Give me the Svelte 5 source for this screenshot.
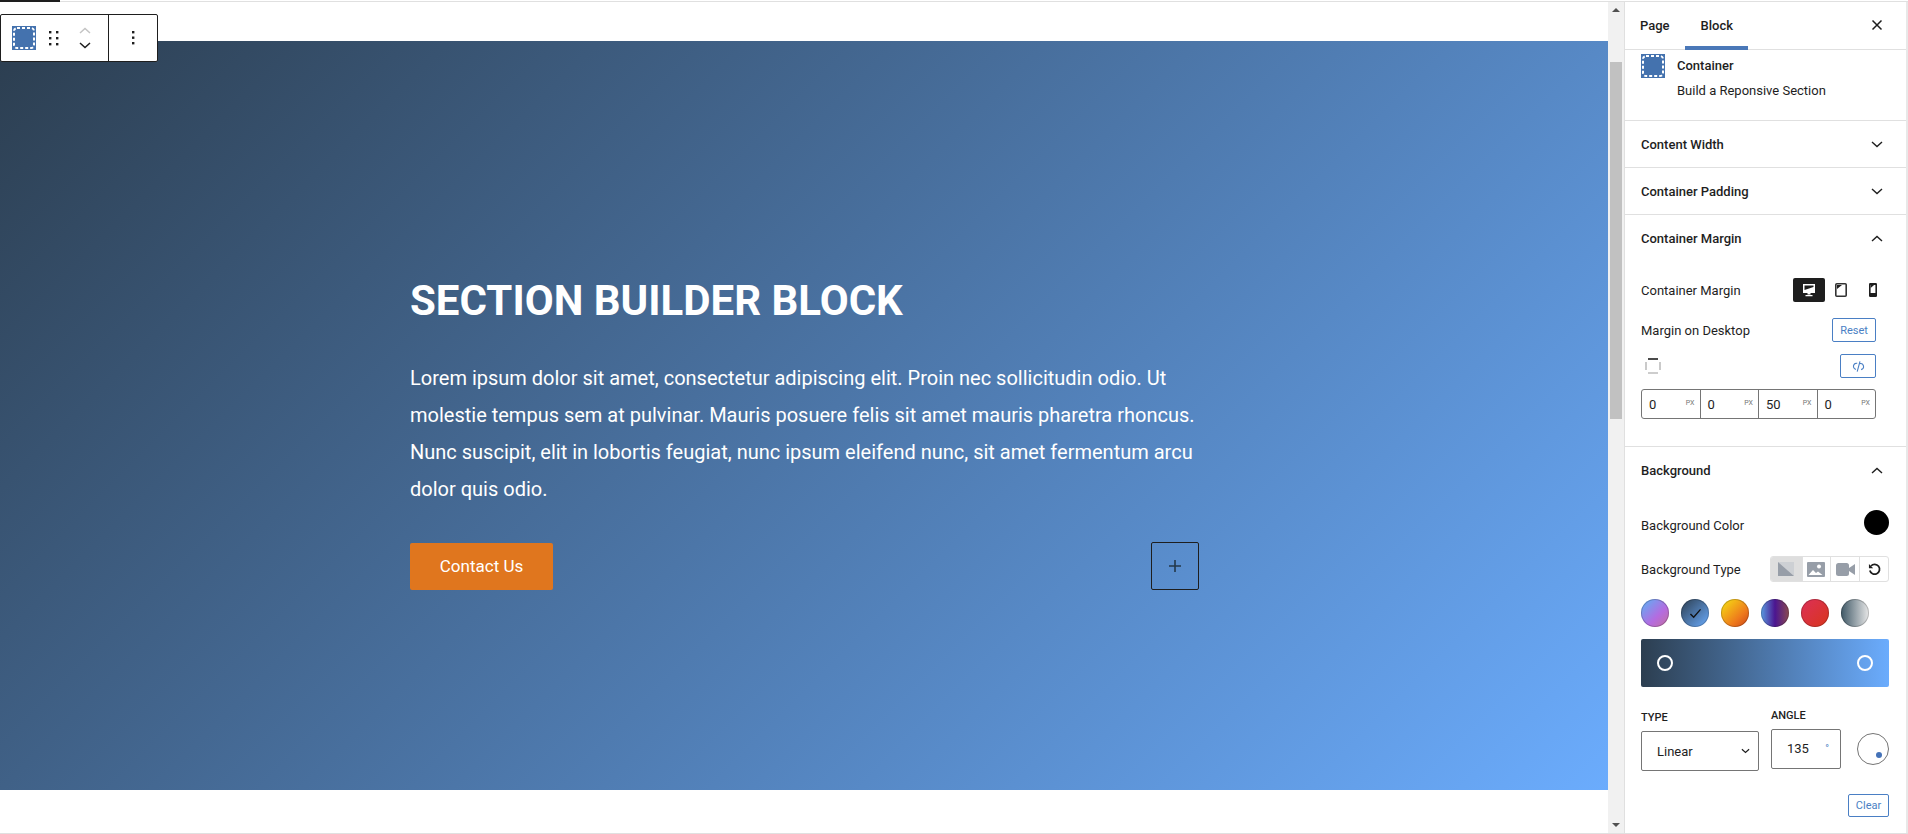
<script>
  const swatches = [
    { bg: 'linear-gradient(135deg, #6aa6f2 12%, #b46be0 60%, #c4709c 100%)' },
    { bg: 'linear-gradient(135deg, #2c3e50, #6bacfd)', active: true },
    { bg: 'linear-gradient(135deg, #f5d414 10%, #ee7a1c 65%, #cc4418)' },
    { bg: 'linear-gradient(90deg, #5a9be0, #4b1590 50%, #8a4a50)' },
    { bg: 'linear-gradient(135deg, #dc3058, #d8351c)' },
    { bg: 'linear-gradient(90deg, #3f5866, #e8e8e8)' }
  ];
  const margins = ['0', '0', '50', '0'];
</script>

<div class="topline"><span class="progress"></span></div>

<div class="editor">
  <main class="canvas">
    <div class="toolbar">
      <div class="tool-group">
        <svg class="block-icon" viewBox="0 0 24 24" width="24" height="24">
          <rect width="24" height="24" fill="#4472ae" />
          <rect x="2" y="2" width="20" height="20" rx="3" fill="none" stroke="#fff" stroke-width="2" stroke-dasharray="3 2" />
        </svg>
        <svg class="drag" viewBox="0 0 10 16" width="10" height="16">
          <g fill="#1e1e1e">
            <rect x="0" y="1" width="2.4" height="2.4" /><rect x="7" y="1" width="2.4" height="2.4" />
            <rect x="0" y="7" width="2.4" height="2.4" /><rect x="7" y="7" width="2.4" height="2.4" />
            <rect x="0" y="13" width="2.4" height="2.4" /><rect x="7" y="13" width="2.4" height="2.4" />
          </g>
        </svg>
        <div class="movers">
          <svg viewBox="0 0 12 7" width="12" height="7"><path d="M1 6l5-4.5L11 6" fill="none" stroke="#c4c4c4" stroke-width="1.5" /></svg>
          <svg viewBox="0 0 12 7" width="12" height="7"><path d="M1 1l5 4.5L11 1" fill="none" stroke="#1e1e1e" stroke-width="1.5" /></svg>
        </div>
      </div>
      <div class="tool-more">
        <svg viewBox="0 0 3 14" width="3" height="14">
          <g fill="#1e1e1e"><rect y="0" width="2.4" height="2.4" /><rect y="5.5" width="2.4" height="2.4" /><rect y="11" width="2.4" height="2.4" /></g>
        </svg>
      </div>
    </div>

    <section class="hero">
      <div class="hero-inner">
        <h1>SECTION BUILDER BLOCK</h1>
        <p>Lorem ipsum dolor sit amet, consectetur adipiscing elit. Proin nec sollicitudin odio. Ut molestie tempus sem at pulvinar. Mauris posuere felis sit amet mauris pharetra rhoncus. Nunc suscipit, elit in lobortis feugiat, nunc ipsum eleifend nunc, sit amet fermentum arcu dolor quis odio.</p>
        <div class="hero-actions">
          <button class="contact">Contact Us</button>
          <button class="inserter" aria-label="Add block">
            <svg viewBox="0 0 14 14" width="14" height="14"><path d="M7 1v12M1 7h12" stroke="#24384a" stroke-width="1.6" /></svg>
          </button>
        </div>
      </div>
    </section>
  </main>

  <div class="scrollbar">
    <span class="arrow up"></span>
    <span class="thumb"></span>
    <span class="arrow down"></span>
  </div>

  <aside class="sidebar">
    <div class="tabs">
      <span class="tab page">Page</span>
      <span class="tab block">Block</span>
      <svg class="close" viewBox="0 0 12 12" width="12" height="12"><path d="M1.5 1.5l9 9M10.5 1.5l-9 9" stroke="#1e1e1e" stroke-width="1.5" /></svg>
    </div>

    <div class="info">
      <svg viewBox="0 0 24 24" width="24" height="24">
        <rect width="24" height="24" fill="#4472ae" />
        <rect x="2" y="2" width="20" height="20" rx="3" fill="none" stroke="#fff" stroke-width="2" stroke-dasharray="3 2" />
      </svg>
      <div class="info-text">
        <strong>Container</strong>
        <span>Build a Reponsive Section</span>
      </div>
    </div>

    <div class="panel-head closed">
      <span>Content Width</span>
      <svg viewBox="0 0 12 7" width="12" height="7"><path d="M1 1l5 4.5L11 1" fill="none" stroke="#1e1e1e" stroke-width="1.4" /></svg>
    </div>
    <div class="panel-head closed">
      <span>Container Padding</span>
      <svg viewBox="0 0 12 7" width="12" height="7"><path d="M1 1l5 4.5L11 1" fill="none" stroke="#1e1e1e" stroke-width="1.4" /></svg>
    </div>

    <div class="panel margin-panel">
      <div class="panel-head">
        <span>Container Margin</span>
        <svg viewBox="0 0 12 7" width="12" height="7"><path d="M1 6l5-4.5L11 6" fill="none" stroke="#1e1e1e" stroke-width="1.4" /></svg>
      </div>
      <div class="row device-row">
        <span class="label">Container Margin</span>
        <div class="devices">
          <span class="device active">
            <svg viewBox="0 0 14 14" width="14" height="14">
              <path d="M1 1h12v9H1z" fill="#fff" /><path d="M2.5 2.5h9v1.5l-9 3z" fill="#1e1e1e" /><path d="M5.5 10h3v1.5h-3zM3.5 12h7v1.2h-7z" fill="#fff" />
            </svg>
          </span>
          <span class="device">
            <svg viewBox="0 0 12 14" width="12" height="14">
              <rect x="0.8" y="0.8" width="10.4" height="12.4" rx="1" fill="#fff" stroke="#333" stroke-width="1.6" /><path d="M2 2h5l-5 4z" fill="#1e1e1e" />
            </svg>
          </span>
          <span class="device">
            <svg viewBox="0 0 8 14" width="8" height="14">
              <rect width="8" height="14" rx="1.2" fill="#1e1e1e" /><path d="M1.6 2h4.8v8H1.6z" fill="#fff" /><path d="M1.6 2h3.5l-3.5 3z" fill="#1e1e1e" />
            </svg>
          </span>
        </div>
      </div>
      <div class="row reset-row">
        <span class="label">Margin on Desktop</span>
        <button class="outline reset">Reset</button>
      </div>
      <div class="row link-row">
        <svg class="side-icon" viewBox="0 0 16 16" width="16" height="16">
          <path d="M3 1h10" stroke="#1e1e1e" stroke-width="1.6" />
          <path d="M1 4v8M15 4v8M3 15h10" stroke="#bdbdbd" stroke-width="1.6" fill="none" />
        </svg>
        <button class="outline link" aria-label="Link values">
          <svg viewBox="0 0 14 14" width="13" height="13">
            <path d="M5.6 3.6a3.3 3.3 0 0 0-1.4 6.5M8.4 3.9a3.3 3.3 0 0 1 1.4 6.5M8.6 1.5l-3 11" fill="none" stroke="#4a7fc4" stroke-width="1.2" />
          </svg>
        </button>
      </div>
      <div class="spacing">
        {#each margins as value}
          <div class="cell"><span>{value}</span><small>PX</small></div>
        {/each}
      </div>
    </div>

    <div class="panel bg-panel">
      <div class="panel-head">
        <span>Background</span>
        <svg viewBox="0 0 12 7" width="12" height="7"><path d="M1 6l5-4.5L11 6" fill="none" stroke="#1e1e1e" stroke-width="1.4" /></svg>
      </div>
      <div class="row color-row">
        <span class="label">Background Color</span>
        <span class="color-dot"></span>
      </div>
      <div class="row type-row">
        <span class="label">Background Type</span>
        <div class="bg-types">
          <span class="bg-type active">
            <svg viewBox="0 0 16 14" width="16" height="14"><path d="M0 0h16v14z" fill="#cdd0d4" /><path d="M0 0l16 14H0z" fill="#979ea8" /></svg>
          </span>
          <span class="bg-type">
            <svg viewBox="0 0 18 15" width="18" height="15">
              <rect width="18" height="15" rx="1" fill="#979ea8" /><circle cx="12" cy="4.5" r="2" fill="#fff" /><path d="M1.5 13l4.5-5 3 3 2-1.5 4.5 3.5z" fill="#fff" />
            </svg>
          </span>
          <span class="bg-type">
            <svg viewBox="0 0 19 13" width="19" height="13">
              <rect width="13" height="13" rx="2.5" fill="#979ea8" /><path d="M13 5l6-4v11l-6-4z" fill="#979ea8" />
            </svg>
          </span>
          <span class="bg-type">
            <svg viewBox="0 0 14 14" width="13" height="13">
              <path d="M3.2 3.2A5.3 5.3 0 1 1 2 8" fill="none" stroke="#1e1e1e" stroke-width="1.9" /><path d="M1 1v4.6h4.6z" fill="#1e1e1e" />
            </svg>
          </span>
        </div>
      </div>
      <div class="swatches">
        {#each swatches as s}
          <span class="swatch" style="background: {s.bg}">
            {#if s.active}
              <svg viewBox="0 0 14 12" width="13" height="11"><path d="M1.5 6.5l3.5 3.5 7.5-8.5" fill="none" stroke="#111" stroke-width="1.5" /></svg>
            {/if}
          </span>
        {/each}
      </div>
      <div class="gradient-bar">
        <span class="handle"></span>
        <span class="handle"></span>
      </div>
      <div class="gradient-controls">
        <div class="field type-field">
          <span class="cap">TYPE</span>
          <div class="select">
            <span>Linear</span>
            <svg viewBox="0 0 10 6" width="9" height="6"><path d="M1 1l4 3.6L9 1" fill="none" stroke="#1e1e1e" stroke-width="1.3" /></svg>
          </div>
        </div>
        <div class="field angle-field">
          <span class="cap">ANGLE</span>
          <div class="angle-input"><span>135</span><small>°</small></div>
        </div>
        <div class="dial"><span class="dial-dot"></span></div>
      </div>
      <div class="clear-row">
        <button class="outline clear">Clear</button>
      </div>
    </div>
  </aside>
</div>

<style>
  :global(body) {
    margin: 0;
    background: #fff;
    font-family: Roboto, "Liberation Sans", sans-serif;
    overflow: hidden;
  }

  .topline {
    height: 1px;
    border-bottom: 1px solid #e0e0e0;
    position: relative;
    box-sizing: content-box;
  }

  .progress {
    position: absolute;
    left: 0;
    top: 0;
    width: 60px;
    height: 2px;
    background: #1e1e1e;
  }

  .editor {
    display: flex;
    height: 831px;
    border-bottom: 1px solid #e0e0e0;
    overflow: hidden;
  }

  .canvas {
    flex: 1;
    min-width: 0;
    padding-top: 39px;
    position: relative;
  }

  .toolbar {
    position: absolute;
    left: 0;
    top: 12px;
    width: 158px;
    height: 48px;
    box-sizing: border-box;
    display: flex;
    background: #fff;
    border: 1.5px solid #1e1e1e;
    border-radius: 2px;
  }

  .tool-group {
    width: 108px;
    box-sizing: border-box;
    display: flex;
    align-items: center;
    border-right: 1.5px solid #1e1e1e;
    padding-left: 11px;
  }

  .drag {
    margin-left: 13px;
  }

  .movers {
    display: flex;
    flex-direction: column;
    gap: 8px;
    margin-left: 20px;
  }

  .tool-more {
    flex: 1;
    display: flex;
    align-items: center;
    justify-content: center;
  }

  .hero {
    height: 749px;
    box-sizing: border-box;
    padding: 230px 0 0 410px;
    background: linear-gradient(135deg, #2c3e50 0%, #6bacfd 100%);
    color: #fff;
  }

  .hero-inner {
    width: 789px;
  }

  h1 {
    margin: 0;
    font-size: 42px;
    line-height: 60px;
    font-weight: 700;
  }

  .hero p {
    margin: 29px 0 0;
    font-size: 20px;
    line-height: 37px;
  }

  .hero-actions {
    display: flex;
    justify-content: space-between;
    align-items: center;
    margin-top: 34px;
  }

  .contact {
    width: 143px;
    height: 47px;
    border: 0;
    border-radius: 2px;
    background: #e0761e;
    color: #fff;
    font: 400 17px Roboto, sans-serif;
  }

  .inserter {
    width: 48px;
    height: 48px;
    padding: 0;
    display: flex;
    align-items: center;
    justify-content: center;
    background: transparent;
    border: 1.5px solid #1e1e1e;
    border-radius: 2px;
  }

  .scrollbar {
    width: 16px;
    flex: none;
    background: #f1f1f1;
    position: relative;
  }

  .thumb {
    position: absolute;
    left: 2px;
    right: 2px;
    top: 60px;
    height: 357px;
    background: #c1c1c1;
  }

  .arrow {
    position: absolute;
    left: 4px;
    width: 0;
    height: 0;
    border-left: 4px solid transparent;
    border-right: 4px solid transparent;
  }

  .arrow.up {
    top: 6px;
    border-bottom: 4px solid #505050;
  }

  .arrow.down {
    bottom: 6px;
    border-top: 4px solid #505050;
  }

  .sidebar {
    width: 284px;
    flex: none;
    box-sizing: border-box;
    border-left: 1px solid #e0e0e0;
    border-right: 2px solid #e8e8e8;
    color: #1e1e1e;
    font-size: 13px;
    overflow: hidden;
  }

  .tabs {
    height: 48px;
    box-sizing: border-box;
    display: flex;
    align-items: center;
    position: relative;
    border-bottom: 1px solid #e0e0e0;
    font-weight: 500;
    padding-bottom: 1px;
  }

  .tab {
    font-size: 13px;
  }

  .tab.page {
    margin-left: 15px;
  }

  .tab.block {
    margin-left: 31px;
    align-self: stretch;
    display: flex;
    align-items: center;
  }

  .tab.block::after {
    content: '';
    position: absolute;
    left: 60px;
    width: 63px;
    bottom: -1px;
    height: 4px;
    background: #4a78b8;
  }

  .close {
    margin-left: auto;
    margin-right: 23px;
  }

  .info {
    height: 71px;
    box-sizing: border-box;
    display: flex;
    gap: 12px;
    padding: 4px 16px 0;
    border-bottom: 1px solid #e0e0e0;
  }

  .info-text {
    display: flex;
    flex-direction: column;
    gap: 10px;
    padding-top: 4px;
    line-height: 15px;
  }

  .info-text strong {
    font-weight: 500;
  }

  .panel-head {
    display: flex;
    align-items: center;
    justify-content: space-between;
    height: 46px;
    padding: 0 23px 0 16px;
    font-weight: 500;
    box-sizing: content-box;
  }

  .panel-head.closed {
    border-bottom: 1px solid #e0e0e0;
  }

  .panel-head svg {
    flex: none;
  }

  .margin-panel {
    height: 232px;
    box-sizing: border-box;
    border-bottom: 1px solid #e0e0e0;
  }

  .row {
    display: flex;
    align-items: center;
    justify-content: space-between;
    padding: 0 16px;
  }

  .device-row {
    margin-top: 17px;
    height: 24px;
    padding-right: 17px;
  }

  .devices {
    display: flex;
    gap: 0;
  }

  .device {
    width: 32px;
    height: 24px;
    display: flex;
    align-items: center;
    justify-content: center;
    border-radius: 2px;
  }

  .device.active {
    background: #1e1e1e;
  }

  .reset-row {
    margin-top: 16px;
    height: 24px;
    padding-right: 30px;
  }

  .outline {
    background: #fff;
    border: 1px solid #4a7fc4;
    border-radius: 2px;
    color: #4a7fc4;
    font: 400 11px Roboto, sans-serif;
    padding: 0;
    display: flex;
    align-items: center;
    justify-content: center;
  }

  .reset {
    width: 44px;
    height: 24px;
  }

  .link-row {
    margin-top: 12px;
    height: 24px;
    padding-right: 30px;
  }

  .side-icon {
    margin-left: 4px;
  }

  .link {
    width: 36px;
    height: 24px;
  }

  .spacing {
    display: flex;
    margin: 11px 30px 0 16px;
    height: 30px;
    box-sizing: border-box;
    border: 1px solid #757575;
    border-radius: 3px;
  }

  .cell {
    flex: 1;
    display: flex;
    align-items: center;
    justify-content: space-between;
    padding: 0 5px 0 7px;
    font-size: 13px;
  }

  .cell + .cell {
    border-left: 1px solid #757575;
  }

  .cell small {
    font-size: 7px;
    color: #757575;
    margin-bottom: 3px;
  }

  .color-row {
    margin-top: 16px;
    height: 26px;
    padding-right: 17px;
  }

  .color-row .label {
    margin-top: 6px;
  }

  .color-dot {
    width: 25px;
    height: 25px;
    border-radius: 50%;
    background: #000;
  }

  .type-row {
    margin-top: 21px;
    height: 26px;
    padding-right: 17px;
  }

  .bg-types {
    display: flex;
    width: 119px;
    height: 26px;
    box-sizing: border-box;
    border: 1px solid #e0e0e0;
    border-radius: 3px;
    overflow: hidden;
  }

  .bg-type {
    flex: 1;
    display: flex;
    align-items: center;
    justify-content: center;
  }

  .bg-type + .bg-type {
    border-left: 1px solid #e0e0e0;
  }

  .bg-type.active {
    background: #dedede;
    flex: 1.1;
    border: 0;
  }

  .swatches {
    display: flex;
    gap: 12px;
    padding: 0 16px;
    margin-top: 17px;
  }

  .swatch {
    width: 28px;
    height: 28px;
    border-radius: 50%;
    display: flex;
    align-items: center;
    justify-content: center;
    box-shadow: inset 0 0 0 1px rgba(0, 0, 0, 0.2);
  }

  .gradient-bar {
    margin: 12px 17px 0 16px;
    height: 48px;
    border-radius: 2px;
    background: linear-gradient(90deg, #2c3e50, #6bacfd);
    display: flex;
    align-items: center;
    justify-content: space-between;
    padding: 0 16px;
  }

  .handle {
    width: 16px;
    height: 16px;
    box-sizing: border-box;
    border: 2.5px solid #fff;
    border-radius: 50%;
  }

  .gradient-controls {
    display: flex;
    align-items: flex-end;
    padding: 0 17px 0 16px;
    margin-top: 22px;
  }

  .field {
    display: flex;
    flex-direction: column;
  }

  .cap {
    font-size: 11px;
    font-weight: 500;
    line-height: 13px;
  }

  .type-field .cap {
    margin-bottom: 7px;
  }

  .angle-field {
    margin-left: 12px;
    margin-bottom: 2px;
  }

  .angle-field .cap {
    margin-bottom: 7px;
  }

  .select {
    width: 118px;
    height: 40px;
    box-sizing: border-box;
    border: 1px solid #757575;
    border-radius: 2px;
    display: flex;
    align-items: center;
    justify-content: space-between;
    padding: 0 8px 0 15px;
    font-size: 13px;
  }

  .angle-input {
    width: 70px;
    height: 40px;
    box-sizing: border-box;
    border: 1px solid #757575;
    border-radius: 2px;
    display: flex;
    align-items: center;
    padding: 0 0 2px 15px;
    font-size: 13px;
    position: relative;
  }

  .angle-input small {
    position: absolute;
    right: 11px;
    top: 13px;
    font-size: 10px;
    color: #4a7fc4;
  }

  .dial {
    width: 32px;
    height: 32px;
    box-sizing: border-box;
    margin: 0 0 6px auto;
    border: 1px solid #757575;
    border-radius: 50%;
    position: relative;
  }

  .dial-dot {
    position: absolute;
    right: 6px;
    bottom: 6px;
    width: 6px;
    height: 6px;
    border-radius: 50%;
    background: #4472b8;
  }

  .clear-row {
    display: flex;
    justify-content: flex-end;
    padding-right: 17px;
    margin-top: 23px;
  }

  .clear {
    width: 41px;
    height: 23px;
  }
</style>
